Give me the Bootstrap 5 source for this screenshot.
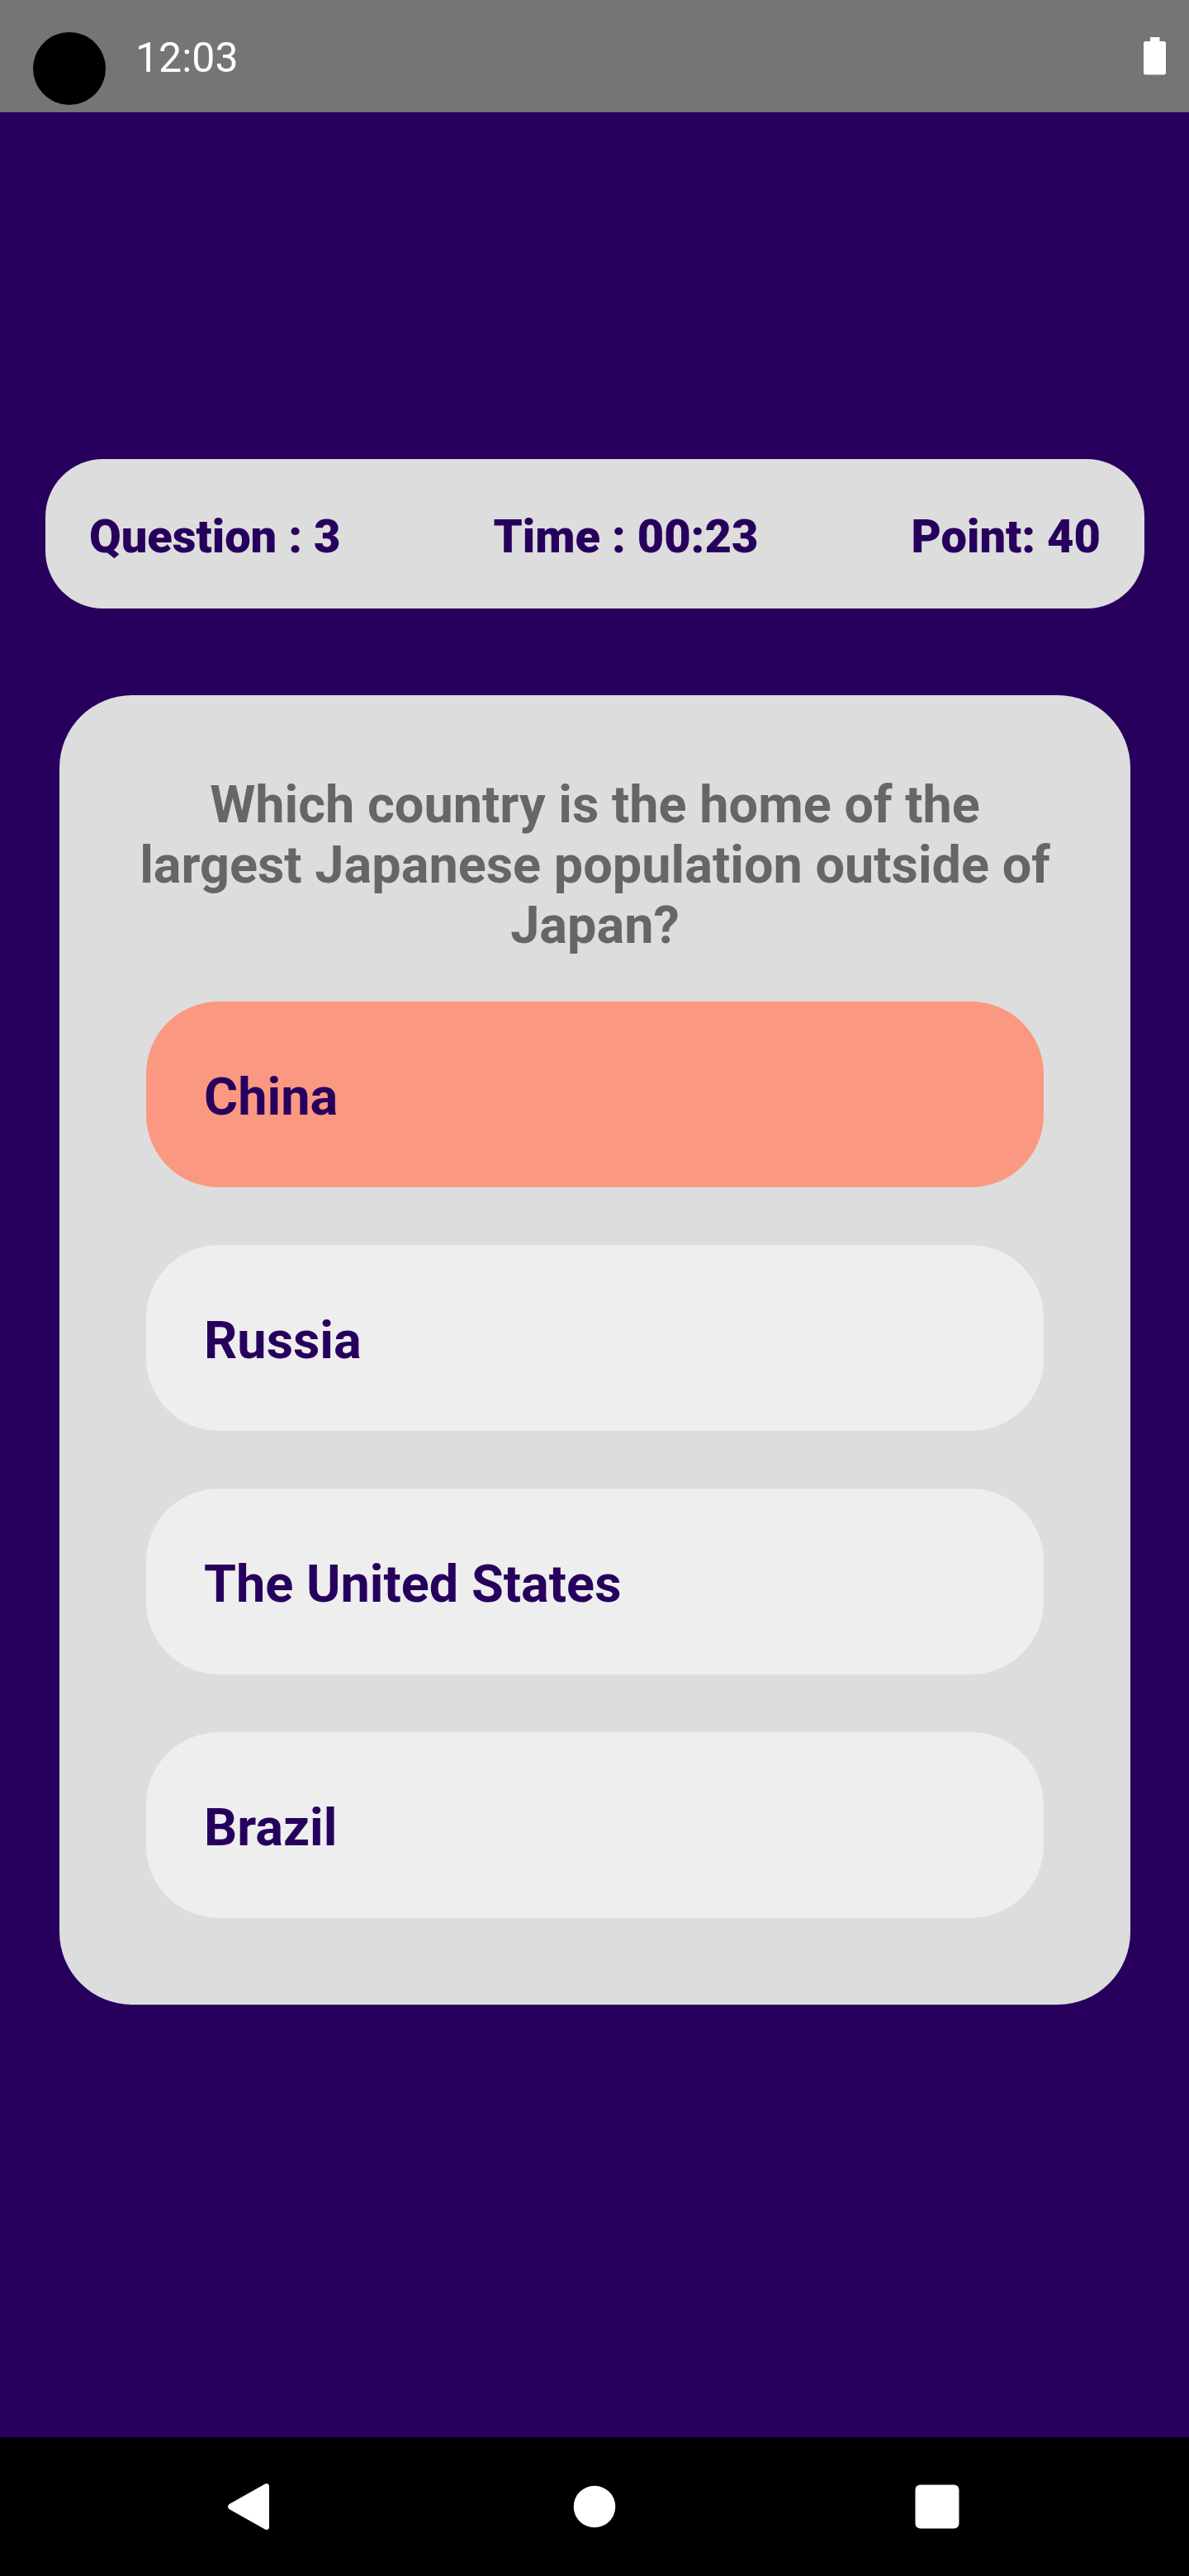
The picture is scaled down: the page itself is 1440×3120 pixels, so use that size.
<!DOCTYPE html>
<html lang="en">
<head>
<meta charset="utf-8">
<meta name="viewport" content="width=device-width, initial-scale=1">
<title>Quiz</title>
<link href="https://cdn.jsdelivr.net/npm/bootstrap@5.3.0/dist/css/bootstrap.min.css" rel="stylesheet">
<style>
  :root { --ink: #27005d; --panel: #ddd; }
  body { background: var(--ink); font-family: Roboto, sans-serif; }
  .status-bar { background: #757575; height: 136px; padding: 0 28px 0 40px; font-size: 50px; line-height: 58px; }
  .status-bar time { padding-top: 4px; }
  .camera-dot { width: 88px; height: 88px; margin: 30px 36px 0 0; }
  .battery { width: 27px; height: 46px; }
  .quiz { padding: 420px 54px 0 55px; }
  .score-panel { background: var(--panel); color: var(--ink); border-radius: 70px; padding: 60px 53px 53px; font-size: 56px; font-weight: 900; line-height: 68px; }
  .question-card { background: var(--panel); border-radius: 88px; margin: 105px 17px 0; padding: 96px 105px 105px; }
  .question-text { color: #666; font-size: 63px; font-weight: 700; line-height: 73px; margin: 0 -17px 56px; }
  .answers { gap: 70px; }
  .answer { --bs-btn-bg: #eee; --bs-btn-color: var(--ink); --bs-btn-hover-bg: #e6e6e6; --bs-btn-hover-color: var(--ink);
    --bs-btn-font-size: 63px; --bs-btn-font-weight: 700; --bs-btn-line-height: 75px; --bs-btn-border-width: 0;
    --bs-btn-border-radius: 88px; --bs-btn-padding-x: 70px; padding-top: 78px; padding-bottom: 72px; }
  .answer-wrong { --bs-btn-bg: #fb9882; --bs-btn-hover-bg: #fb9882; }
  .nav-keys { height: 168px; padding: 0 97px; }
  .nav-keys svg { width: 60px; height: 60px; }
</style>
<script src="https://cdn.jsdelivr.net/npm/bootstrap@5.3.0/dist/js/bootstrap.bundle.min.js"></script>
</head>
<body class="d-flex flex-column min-vh-100">
  <header class="status-bar d-flex align-items-center text-white">
    <span class="camera-dot rounded-circle bg-black"></span>
    <time class="me-auto">12:03</time>
    <svg class="battery" viewBox="0 0 27 46" fill="#fff" role="img" aria-label="Battery full"><path d="M8 0h11.500v5H24.500Q27 5 27 7.500V43Q27 45.500 24.500 45.500H2.500Q0 45.500 0 43V7.500Q0 5 2.500 5H8z"/></svg>
  </header>

  <main class="quiz flex-grow-1">
    <section class="score-panel d-flex justify-content-between">
      <span>Question : 3</span>
      <span>Time : 00:23</span>
      <span>Point: 40</span>
    </section>

    <section class="question-card">
      <h1 class="question-text text-center">Which country is the home of the largest Japanese population outside of Japan?</h1>
      <div class="answers d-grid">
        <button type="button" class="btn answer answer-wrong text-start">China</button>
        <button type="button" class="btn answer text-start">Russia</button>
        <button type="button" class="btn answer text-start">The United States</button>
        <button type="button" class="btn answer text-start">Brazil</button>
      </div>
    </section>
  </main>

  <nav class="nav-keys d-flex bg-black" aria-label="System navigation">
    <button type="button" class="btn border-0 p-0 flex-fill" aria-label="Back"><svg viewBox="0 0 60 60" fill="#fff"><path d="M2.500 27 46 2.500Q50.500 .500 51 5.500V54.500Q50.500 59.500 46 57.500L2.500 33Q-.500 30 2.500 27z"/></svg></button>
    <button type="button" class="btn border-0 p-0 flex-fill" aria-label="Home"><svg viewBox="0 0 60 60" fill="#fff"><circle cx="30" cy="30" r="25.300"/></svg></button>
    <button type="button" class="btn border-0 p-0 flex-fill" aria-label="Recent apps"><svg viewBox="0 0 60 60" fill="#fff"><rect x="3.500" y="3.500" width="53" height="53" rx="6"/></svg></button>
  </nav>
</body>
</html>
